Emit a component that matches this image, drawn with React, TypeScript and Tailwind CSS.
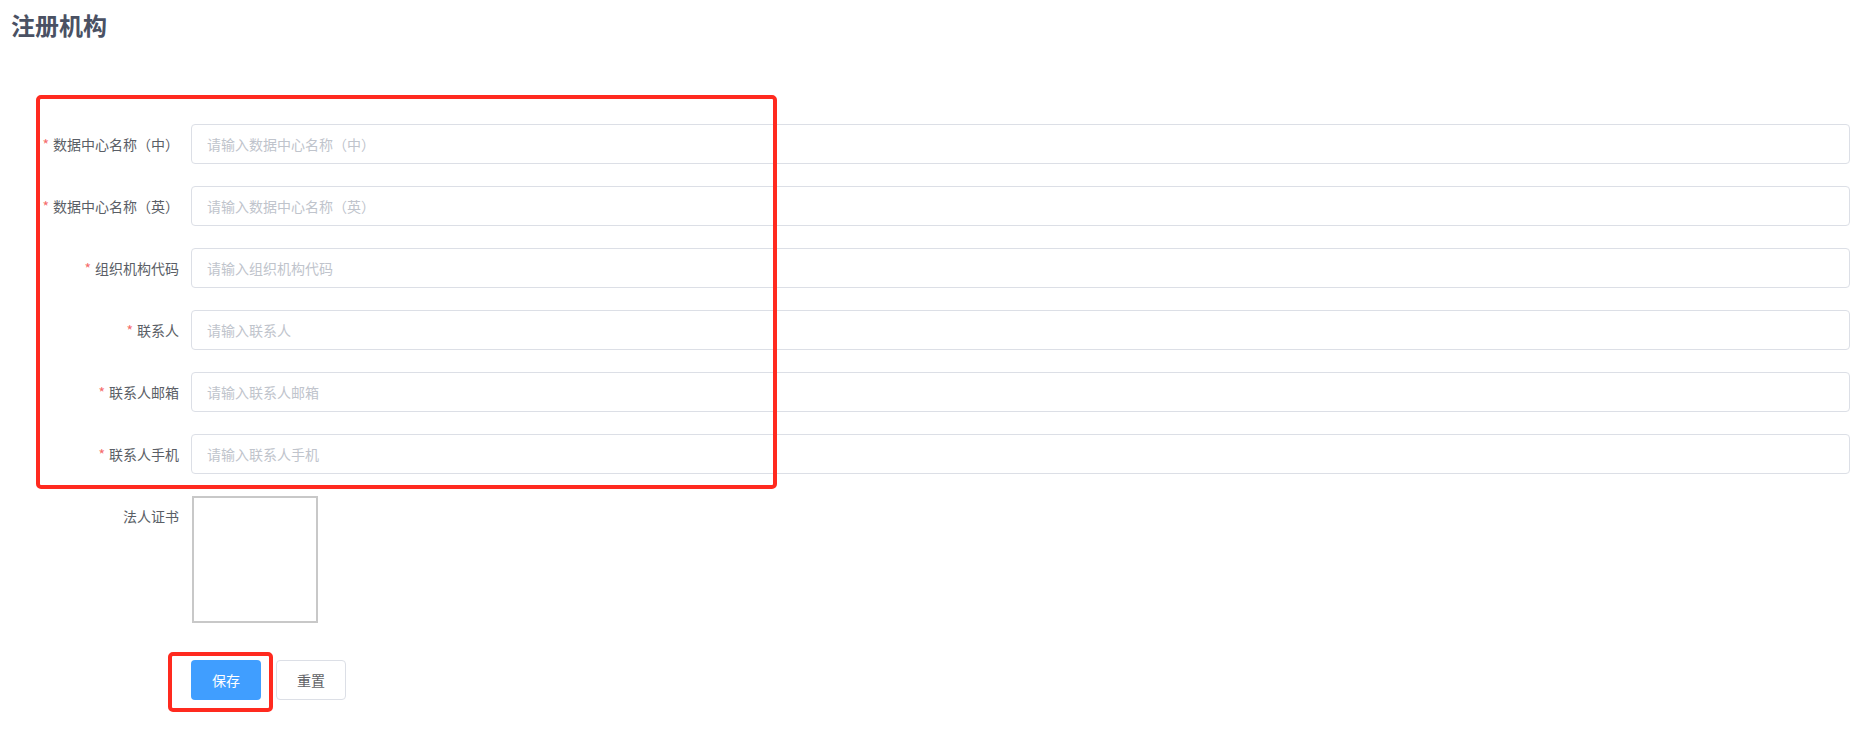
import React from "react"

const fields = [
  { label: "数据中心名称（中）", placeholder: "请输入数据中心名称（中）" },
  { label: "数据中心名称（英）", placeholder: "请输入数据中心名称（英）" },
  { label: "组织机构代码", placeholder: "请输入组织机构代码" },
  { label: "联系人", placeholder: "请输入联系人" },
  { label: "联系人邮箱", placeholder: "请输入联系人邮箱" },
  { label: "联系人手机", placeholder: "请输入联系人手机" },
]

export default function App() {
  return (
    <div className="relative min-h-[730px] bg-white font-['Noto_Sans_CJK_SC','Noto_Sans',sans-serif]">
      <h2 className="pl-[11px] pt-[7px] text-[24px] font-bold leading-[36px] text-[#4a5163]">注册机构</h2>

      <form className="mt-[81px] pl-[31px] pr-[25px]" onSubmit={(e) => e.preventDefault()}>
        {fields.map((f) => (
          <div key={f.label} className="mb-[22px] flex">
            <label className="w-[160px] shrink-0 pr-[12px] text-right text-[14px] leading-[40px] text-[#5a5e66]">
              <span className="mr-[4px] text-[#f56c6c]">*</span>
              {f.label}
            </label>
            <input
              placeholder={f.placeholder}
              className="h-[40px] flex-1 rounded-[4px] border border-[#dcdfe6] px-[15px] text-[14px] text-[#606266] outline-none placeholder:text-[#c0c4cc]"
            />
          </div>
        ))}

        <div className="mb-[37px] flex">
          <label className="w-[160px] shrink-0 pr-[12px] text-right text-[14px] leading-[40px] text-[#5a5e66]">法人证书</label>
          <div className="ml-[1px] h-[127px] w-[126px] border-2 border-[#c8c8c8]" />
        </div>

        <div className="flex pl-[160px]">
          <button className="h-[40px] w-[70px] rounded-[4px] bg-[#409eff] text-[14px] text-white">保存</button>
          <button
            type="button"
            className="ml-[15px] h-[40px] w-[70px] rounded-[4px] border border-[#dcdfe6] bg-white text-[14px] text-[#606266]"
          >
            重置
          </button>
        </div>
      </form>

      {/* annotation boxes */}
      <div className="pointer-events-none absolute left-[36px] top-[95px] h-[394px] w-[741px] rounded-[5px] border-4 border-[#ff2a1f]" />
      <div className="pointer-events-none absolute left-[168px] top-[652px] h-[60px] w-[105px] rounded-[5px] border-4 border-[#ff2a1f]" />
    </div>
  )
}
